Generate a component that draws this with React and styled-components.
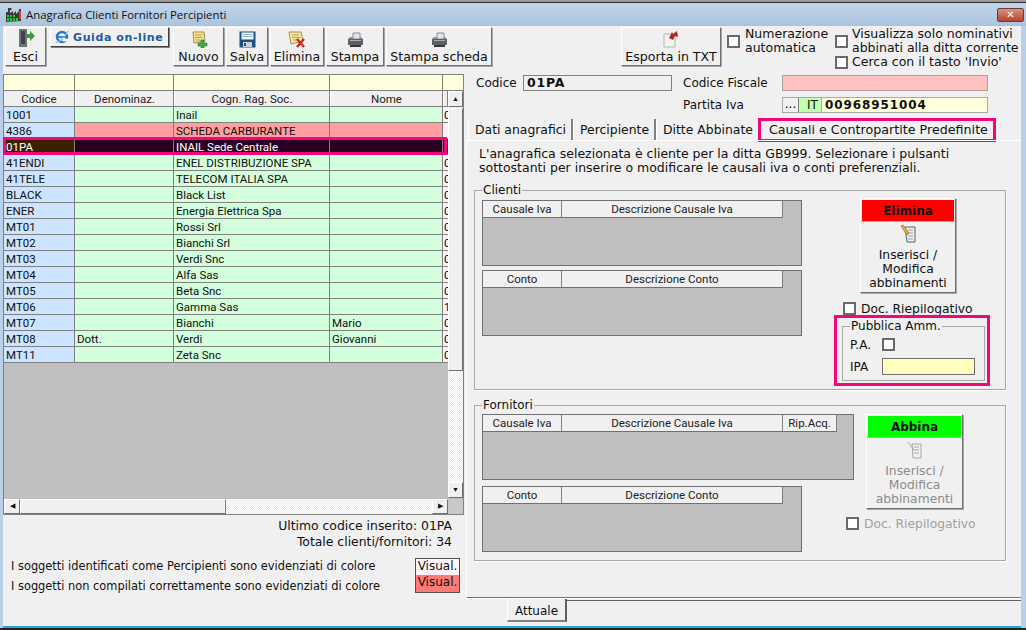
import styled, { createGlobalStyle } from "styled-components"

const ROWS = [
    { code: "1001", title: "", name: "Inail", first: "", extra: "0" },
    { code: "4386", title: "", name: "SCHEDA CARBURANTE", first: "", extra: "", kind: "error" },
    { code: "01PA", title: "", name: "INAIL Sede Centrale", first: "", extra: "", kind: "selected" },
    { code: "41ENDI", title: "", name: "ENEL DISTRIBUZIONE SPA", first: "", extra: "0" },
    { code: "41TELE", title: "", name: "TELECOM ITALIA SPA", first: "", extra: "0" },
    { code: "BLACK", title: "", name: "Black List", first: "", extra: "0" },
    { code: "ENER", title: "", name: "Energia Elettrica Spa", first: "", extra: "0" },
    { code: "MT01", title: "", name: "Rossi Srl", first: "", extra: "0" },
    { code: "MT02", title: "", name: "Bianchi Srl", first: "", extra: "0" },
    { code: "MT03", title: "", name: "Verdi Snc", first: "", extra: "0" },
    { code: "MT04", title: "", name: "Alfa Sas", first: "", extra: "0" },
    { code: "MT05", title: "", name: "Beta Snc", first: "", extra: "0" },
    { code: "MT06", title: "", name: "Gamma Sas", first: "", extra: "1" },
    { code: "MT07", title: "", name: "Bianchi", first: "Mario", extra: "0" },
    { code: "MT08", title: "Dott.", name: "Verdi", first: "Giovanni", extra: "0" },
    { code: "MT11", title: "", name: "Zeta Snc", first: "", extra: "0" },
]

const FactoryIcon = () => (
    <svg width="17" height="17" viewBox="0 0 17 17">
        <path d="M1 16V6h2V2h3l1 2H5v3l3-2v3l3-3v3l3-3v-2h2v12z" fill="#3a3a3a" />
        <path d="M2 15v-3h2v3zM5 15v-3h2v3zM8 15v-3h2v3zM11 15v-3h2v3z" fill="#2fc23a" />
        <path d="M2 11V9h2v2zM5 11V9h2v2zM8 11V9h2v2z" fill="#2fc23a" />
        <rect x="14" y="5" width="2" height="8" fill="#d33" />
    </svg>
)

const ExitIcon = () => (
    <svg width="20" height="20" viewBox="0 0 20 20">
        <path d="M3 1h8v18H3z" fill="#6d7276" />
        <path d="M5 3h4v13H5z" fill="#3e4347" />
        <path d="M11 6l3 0v-3l5 5-5 5v-3h-3z" fill="#3f9a3a" />
    </svg>
)

const IeIcon = () => (
    <svg width="16" height="16" viewBox="0 0 18 18">
        <circle cx="9" cy="9" r="5.6" fill="none" stroke="#2a78c8" strokeWidth="2.8" />
        <path d="M4 9h10" stroke="#2a78c8" strokeWidth="2" />
        <path d="M10 11h6v3h-6z" fill="#f0f0f0" />
        <path d="M2 15C5 16 13 8 16 2" fill="none" stroke="#8fbce8" strokeWidth="1.2" />
    </svg>
)

const NoteNewIcon = () => (
    <svg width="18" height="18" viewBox="0 0 18 18">
        <path d="M3 2h11l1 9-11 2z" fill="#f6e08f" stroke="#a59050" />
        <path d="M5 5h7M5 7.500h7M6 10h4" stroke="#b5a060" />
        <path d="M11 10h3v3h3v3h-3v2h-3v-2H8v-3h3z" fill="#35b23c" stroke="#1d7a24" strokeWidth=".6" />
    </svg>
)

const NoteDeleteIcon = () => (
    <svg width="20" height="18" viewBox="0 0 20 18">
        <path d="M2 2h12l2 9-12 3z" fill="#f6e4a2" stroke="#a59050" />
        <path d="M5 5h7M5 7.500h8M6 10h4" stroke="#b5a060" />
        <path d="M10 9l7 8M17 9l-7 8" stroke="#d4281e" strokeWidth="2.4" />
    </svg>
)

const FloppyIcon = () => (
    <svg width="17" height="17" viewBox="0 0 17 17">
        <rect width="16" height="16" x=".5" y=".5" fill="#1e4f7d" />
        <rect width="12" height="7" x="2.500" y="1.500" fill="#eef4fa" />
        <path d="M3.500 3.500h10M3.500 5.500h10" stroke="#9db8d2" />
        <rect width="9" height="5" x="4" y="11" fill="#c6d2de" />
        <rect width="2" height="3" x="5" y="12" fill="#1e4f7d" />
    </svg>
)

const PrinterIcon = () => (
    <svg width="17" height="16" viewBox="0 0 17 16">
        <path d="M6 1h7v6H6z" fill="#e4e4e4" stroke="#8a8a8a" />
        <path d="M1 7h15v6H1z" fill="#5c6064" />
        <path d="M1 7l2-2h3v2zM13 5h1l2 2h-3z" fill="#8c9094" />
        <path d="M3 13h11v2H3z" fill="#35383b" />
        <path d="M3 8h11v1H3z" fill="#a8adb2" />
    </svg>
)

const ExportIcon = () => (
    <svg width="18" height="18" viewBox="0 0 18 18">
        <path d="M2 4h9l2 2v11H2z" fill="#f4f4f4" stroke="#b5b5b5" />
        <path d="M7 8l3-6 1 2 4-3 1 6-3-1-2 4z" fill="#b3261e" />
    </svg>
)

const PadIcon = ({ $muted }) => (
    <svg width="18" height="20" viewBox="0 0 18 20">
        {$muted ? (
            <g fill="none" stroke="#a8a8a8">
                <path d="M6 4h9v14H7z" fill="#f0f0f0" />
                <path d="M8 7h5M8 10h5M8 13h5" />
                <path d="M2 2l6 8" />
            </g>
        ) : (
            <g>
                <path d="M6 3h10v15H8z" fill="#e9eef2" stroke="#59636b" />
                <path d="M9 6h5M9 9h5M9 12h5M9 15h5" stroke="#9aa6af" />
                <path d="M2 2l2-1 6 8-2 2z" fill="#e8b030" stroke="#8b5a10" strokeWidth=".6" />
            </g>
        )}
    </svg>
)

const App = () => {
    return (
        <Page>
            <GlobalStyle />
            <BehindStrip />
            <TitleBar>
                <FactoryIcon />
                <TitleText>Anagrafica Clienti Fornitori Percipienti</TitleText>
                <CloseButton>✕</CloseButton>
            </TitleBar>
            <Client>
                <Toolbar>
                    <ToolButton $width={41}><ExitIcon />Esci</ToolButton>
                    <HelpButton><IeIcon />Guida on-line</HelpButton>
                    <ToolButton $width={51} $gap={2}><NoteNewIcon />Nuovo</ToolButton>
                    <ToolButton $width={42}><FloppyIcon />Salva</ToolButton>
                    <ToolButton $width={54}><NoteDeleteIcon />Elimina</ToolButton>
                    <ToolButton $width={58}><PrinterIcon />Stampa</ToolButton>
                    <ToolButton $width={106}><PrinterIcon />Stampa scheda</ToolButton>
                    <ToolButton $width={100} $gap={127}><ExportIcon />Esporta in TXT</ToolButton>
                    <TopOption $width={106}>
                        <CheckBox />
                        <span>Numerazione<br />automatica</span>
                    </TopOption>
                    <TopOptions>
                        <TopCheck>
                            <CheckBox />
                            <span>Visualizza solo nominativi<br />abbinati alla ditta corrente</span>
                        </TopCheck>
                        <TopCheck>
                            <CheckBox />
                            <span>Cerca con il tasto 'Invio'</span>
                        </TopCheck>
                    </TopOptions>
                </Toolbar>
                <Body>
                    <LeftColumn>
                        <GridFrame>
                            <FilterRow>
                                <FilterCell $width={71} />
                                <FilterCell $width={99} />
                                <FilterCell $width={156} />
                                <FilterCell $width={113} />
                                <FilterCell $width={20} />
                            </FilterRow>
                            <GridMiddle>
                                <GridTable>
                                    <HeaderRow>
                                        <HeadCell $width={71}>Codice</HeadCell>
                                        <HeadCell $width={99}>Denominaz.</HeadCell>
                                        <HeadCell $width={156}>Cogn. Rag. Soc.</HeadCell>
                                        <HeadCell $width={113}>Nome</HeadCell>
                                        <HeadCell $width={5} />
                                    </HeaderRow>
                                    {ROWS.map((row) => (
                                        <Row key={row.code} $kind={row.kind}>
                                            <CodeCell $kind={row.kind}>{row.code}</CodeCell>
                                            <Cell $width={99} $kind={row.kind}>{row.title}</Cell>
                                            <Cell $width={156} $kind={row.kind}>{row.name}</Cell>
                                            <Cell $width={113} $kind={row.kind}>{row.first}</Cell>
                                            <LastCell $kind={row.kind}>{row.extra}</LastCell>
                                        </Row>
                                    ))}
                                </GridTable>
                                <VScroll>
                                    <ArrowButton>▲</ArrowButton>
                                    <VThumb />
                                    <ScrollTrack />
                                    <ArrowButton>▼</ArrowButton>
                                </VScroll>
                            </GridMiddle>
                            <HScroll>
                                <SideButton>◀</SideButton>
                                <HThumb />
                                <ScrollTrack />
                                <SideButton>▶</SideButton>
                                <ScrollCorner />
                            </HScroll>
                        </GridFrame>
                        <Totals>
                            <div>Ultimo codice inserito: 01PA</div>
                            <div>Totale clienti/fornitori: 34</div>
                        </Totals>
                        <Legend>
                            <LegendTexts>
                                <div>I soggetti identificati come Percipienti sono evidenziati di colore</div>
                                <div>I soggetti non compilati correttamente sono evidenziati di colore</div>
                            </LegendTexts>
                            <LegendBoxes>
                                <VisualBox>Visual.</VisualBox>
                                <VisualBox $error>Visual.</VisualBox>
                            </LegendBoxes>
                        </Legend>
                    </LeftColumn>
                    <RightColumn>
                        <Fields>
                            <FieldLabel>Codice</FieldLabel>
                            <CodeField>01PA</CodeField>
                            <FieldLabel $column={4}>Codice Fiscale</FieldLabel>
                            <FiscalField />
                            <FieldLabel $column={4}>Partita Iva</FieldLabel>
                            <VatField>
                                <DotsButton>...</DotsButton>
                                <CountryBox>IT</CountryBox>
                                <VatValue>00968951004</VatValue>
                            </VatField>
                        </Fields>
                        <Tabs>
                            <Tab>Dati anagrafici</Tab>
                            <Tab>Percipiente</Tab>
                            <Tab>Ditte Abbinate</Tab>
                            <ActiveTab>Causali e Contropartite Predefinite</ActiveTab>
                        </Tabs>
                        <TabPanel>
                            <Intro>
                                L'anagrafica selezionata è cliente per la ditta GB999. Selezionare i pulsanti<br />
                                sottostanti per inserire o modificare le causali iva o conti preferenziali.
                            </Intro>
                            <Group $height={206} $top={9} $pad={3}>
                                <legend>Clienti</legend>
                                <GroupBody>
                                    <Tables $gap={4}>
                                        <MiniTable $width={320} $height={66}>
                                            <MiniHead>
                                                <MiniCol $width={79}>Causale Iva</MiniCol>
                                                <MiniCol $width={221}>Descrizione Causale Iva</MiniCol>
                                            </MiniHead>
                                        </MiniTable>
                                        <MiniTable $width={320} $height={66}>
                                            <MiniHead>
                                                <MiniCol $width={79}>Conto</MiniCol>
                                                <MiniCol $width={221}>Descrizione Conto</MiniCol>
                                            </MiniHead>
                                        </MiniTable>
                                    </Tables>
                                    <ClientSide>
                                        <ActionButton $left={26} $top={-2} $width={96}>
                                            <ActionHead $color="#ff0000">Elimina</ActionHead>
                                            <ActionBody>
                                                <PadIcon />
                                                <span>Inserisci /<br />Modifica<br />abbinamenti</span>
                                            </ActionBody>
                                        </ActionButton>
                                        <DocCheck $left={9} $top={9}>
                                            <CheckBox />
                                            <span>Doc. Riepilogativo</span>
                                        </DocCheck>
                                        <PinkBox>
                                            <PaGroup>
                                                <legend>Pubblica Amm.</legend>
                                                <PaRow $top={5}>
                                                    <PaLabel>P.A.</PaLabel>
                                                    <CheckBox />
                                                </PaRow>
                                                <PaRow $top={7} $tall>
                                                    <PaLabel>IPA</PaLabel>
                                                    <IpaField />
                                                </PaRow>
                                            </PaGroup>
                                        </PinkBox>
                                    </ClientSide>
                                </GroupBody>
                            </Group>
                            <Group $height={162} $top={9} $pad={2}>
                                <legend>Fornitori</legend>
                                <GroupBody>
                                    <Tables $gap={6}>
                                        <MiniTable $width={372} $height={66}>
                                            <MiniHead>
                                                <MiniCol $width={79}>Causale Iva</MiniCol>
                                                <MiniCol $width={221}>Descrizione Causale Iva</MiniCol>
                                                <MiniCol $width={54}>Rip.Acq.</MiniCol>
                                            </MiniHead>
                                        </MiniTable>
                                        <MiniTable $width={320} $height={66}>
                                            <MiniHead>
                                                <MiniCol $width={79}>Conto</MiniCol>
                                                <MiniCol $width={221}>Descrizione Conto</MiniCol>
                                            </MiniHead>
                                        </MiniTable>
                                    </Tables>
                                    <SupplierSide>
                                        <ActionButton $left={12} $top={0} $width={97}>
                                            <ActionHead $color="#00ff00">Abbina</ActionHead>
                                            <ActionBody $muted>
                                                <PadIcon $muted />
                                                <span>Inserisci /<br />Modifica<br />abbinamenti</span>
                                            </ActionBody>
                                        </ActionButton>
                                        <DocCheck $left={-8} $top={8} $muted>
                                            <CheckBox />
                                            <span>Doc. Riepilogativo</span>
                                        </DocCheck>
                                    </SupplierSide>
                                </GroupBody>
                            </Group>
                        </TabPanel>
                        <BottomTabs>
                            <BottomTab>Attuale</BottomTab>
                            <BottomRest />
                        </BottomTabs>
                    </RightColumn>
                </Body>
            </Client>
            <BottomEdge />
        </Page>
    )
}

export default App

const PINK = "#f5057c"
const UI_FONT = `"DejaVu Sans", sans-serif`
const GRID_FONT = `Roboto, sans-serif`

const GlobalStyle = createGlobalStyle`
    html, body {
        margin: 0;
        padding: 0;
        background: #2a2a2a;
    }
    * {
        box-sizing: border-box;
    }
`

const Page = styled.div`
    display: flex;
    flex-direction: column;
    width: 1026px;
    height: 630px;
    overflow: hidden;
    font-family: ${UI_FONT};
    font-size: 12px;
    color: #101010;
    background: #b9d0e8;
`

const BehindStrip = styled.div`
    flex: none;
    height: 3px;
    background: linear-gradient(#9a9a9a 0 2px, #2e2e2e 2px);
`

const TitleBar = styled.div`
    display: flex;
    flex: none;
    align-items: center;
    gap: 4px;
    height: 23px;
    padding: 0 2px 0 5px;
    background: linear-gradient(#c3d6ea, #a9c3df);
`

const TitleText = styled.span`
    font-family: "Open Sans", sans-serif;
    font-size: 11.400px;
    color: #111;
`

const CloseButton = styled.div`
    display: flex;
    align-items: center;
    justify-content: center;
    margin-left: auto;
    width: 27px;
    height: 14px;
    border: 1px solid #6e3a34;
    border-radius: 2px;
    background: linear-gradient(#d99080, #b8432f);
    color: #fff;
    font-size: 10px;
    font-weight: bold;
`

const Client = styled.div`
    display: flex;
    flex-direction: column;
    flex: none;
    height: 602px;
    margin: 0 5px 0 3px;
    background: #f0f0f0;
    border-bottom: 2px solid #2ba4d8;
`

const BottomEdge = styled.div`
    flex: none;
    height: 2px;
    background: #222;
`

const Toolbar = styled.div`
    display: flex;
    flex: none;
    align-items: flex-start;
    gap: 2px;
    height: 41px;
    padding: 1px 0 0 2px;
`

const raised = `
    border: 1px solid;
    border-color: #fff #707070 #707070 #fff;
    box-shadow: 1px 1px 0 #a8a8a8;
    background: #f0f0f0;
`

const ToolButton = styled.div`
    ${raised}
    display: flex;
    flex-direction: column;
    align-items: center;
    justify-content: flex-end;
    flex: none;
    width: ${(props) => props.$width}px;
    height: 39px;
    margin-left: ${(props) => props.$gap || 0}px;
    font-size: 12.600px;
    line-height: 16px;
    white-space: nowrap;

    svg {
        margin-bottom: 1px;
    }
`

const HelpButton = styled.div`
    display: flex;
    align-items: center;
    gap: 3px;
    flex: none;
    width: 119px;
    height: 20px;
    margin-left: 2px;
    padding-left: 3px;
    border: 1px solid;
    border-color: #fff #404040 #404040 #fff;
    box-shadow: 1px 1px 0 #808080;
    color: #1d5aa8;
    font-size: 11px;
    font-weight: bold;
    letter-spacing: 0.6px;
    white-space: nowrap;
`

const CheckBox = styled.span`
    display: block;
    flex: none;
    width: 13px;
    height: 13px;
    border: 2px solid #6a6a6a;
    background: #fff;
`

const TopOption = styled.div`
    display: flex;
    align-items: center;
    gap: 5px;
    flex: none;
    width: ${(props) => props.$width}px;
    margin-left: 4px;
    font-size: 12.500px;
    line-height: 14px;
`

const TopOptions = styled.div`
    display: flex;
    flex-direction: column;
    flex: none;
    font-size: 12.500px;
    line-height: 14px;
`

const TopCheck = styled.div`
    display: flex;
    align-items: center;
    gap: 4px;
    white-space: nowrap;
`

const Body = styled.div`
    display: grid;
    grid-template-columns: 463px 1fr;
    height: 559px;
`

const LeftColumn = styled.div`
    display: flex;
    flex-direction: column;
    padding-top: 7px;
`

const GridFrame = styled.div`
    display: flex;
    flex-direction: column;
    width: 461px;
    height: 441px;
    border: 1px solid #808080;
    font-family: ${GRID_FONT};
    font-size: 11.500px;
`

const FilterRow = styled.div`
    display: flex;
    flex: none;
    height: 16px;
    background: #ffffdc;
    border-bottom: 1px solid #808080;
`

const FilterCell = styled.div`
    width: ${(props) => props.$width}px;
    border-right: 1px solid #808080;
    &:last-child {
        border-right: 0;
    }
`

const GridMiddle = styled.div`
    display: flex;
    flex: 1;
    min-height: 0;
`

const GridTable = styled.div`
    flex: 1;
    min-width: 0;
    background: #bfbfbf;
`

const HeaderRow = styled.div`
    display: flex;
    height: 16px;
    background: #f0f0f0;
    border-bottom: 1px solid #808080;
`

const HeadCell = styled.div`
    flex: none;
    width: ${(props) => props.$width}px;
    overflow: hidden;
    border-right: 1px solid #808080;
    border-left: 1px solid #fff;
    text-align: center;
    line-height: 17px;
    color: #222;
    &:first-child {
        border-left: 0;
    }
`

const Row = styled.div`
    position: relative;
    display: flex;
    height: 16px;
    border-bottom: 1px solid #808080;

    ${(props) => props.$kind === "selected" && `
        z-index: 1;
        &::after {
            content: "";
            position: absolute;
            top: -2px;
            right: 1px;
            bottom: -1px;
            left: -1px;
            border: 3px solid ${PINK};
        }
    `}
`

const cellColor = (kind) => {
    if (kind === "error") return "#ff9f9f"
    if (kind === "selected") return "#2a0022"
    return "#d4ffdc"
}

const Cell = styled.div`
    flex: none;
    width: ${(props) => props.$width}px;
    overflow: hidden;
    padding-left: 2px;
    border-right: 1px solid #808080;
    background: ${(props) => cellColor(props.$kind)};
    color: ${(props) => (props.$kind === "selected" ? "#fff" : "#101010")};
    line-height: 16px;
    white-space: nowrap;
`

const CodeCell = styled(Cell)`
    width: 71px;
    background: ${(props) => (props.$kind === "selected" ? "#3c2000" : "#cce4ff")};
`

const LastCell = styled(Cell)`
    width: 5px;
    border-right: 0;
    padding-left: 1px;
    background: ${(props) => {
        if (props.$kind === "selected") return "#2a0022"
        return props.$kind === "error" ? "#ffeef6" : "#fff4f8"
    }};
`

const VScroll = styled.div`
    display: flex;
    flex-direction: column;
    flex: none;
    width: 15px;
    background: #f0f0f0;
`

const ArrowButton = styled.div`
    ${raised}
    flex: none;
    height: 16px;
    font-size: 7px;
    line-height: 14px;
    text-align: center;
    color: #111;
    box-shadow: none;
`

const VThumb = styled.div`
    ${raised}
    flex: none;
    height: 263px;
    margin-top: 1px;
    box-shadow: none;
`

const ScrollTrack = styled.div`
    flex: 1;
    background: repeating-conic-gradient(#fff 0 25%, #ececec 0 50%) 0 0 / 2px 2px;
`

const HScroll = styled.div`
    display: flex;
    flex: none;
    height: 16px;
    border-top: 1px solid #bdbdbd;
`

const SideButton = styled.div`
    ${raised}
    flex: none;
    width: 16px;
    font-size: 7px;
    line-height: 13px;
    text-align: center;
    box-shadow: none;
`

const HThumb = styled.div`
    ${raised}
    flex: none;
    width: 206px;
    box-shadow: none;
    border-right-color: #808080;
`

const ScrollCorner = styled.div`
    flex: none;
    width: 15px;
    background: #c8c8c8;
`

const Totals = styled.div`
    padding: 3px 14px 0 0;
    font-size: 12.400px;
    text-align: right;
    line-height: 16px;
`

const Legend = styled.div`
    display: flex;
    align-items: flex-start;
    margin-top: 6px;
    padding: 0 6px 0 8px;
    font-size: 11.400px;
`

const LegendTexts = styled.div`
    flex: 1;
    line-height: 20px;
    white-space: nowrap;
`

const LegendBoxes = styled.div`
    flex: none;
    width: 45px;
    margin-top: 2px;
    border: 1px solid #505050;
    font-size: 12px;
`

const VisualBox = styled.div`
    height: ${(props) => (props.$error ? 17 : 16)}px;
    background: ${(props) => (props.$error ? "#ff7a74" : "#fff4fa")};
    line-height: 15px;
    text-align: center;
`

const RightColumn = styled.div`
    display: flex;
    flex-direction: column;
    min-width: 0;
`

const Fields = styled.div`
    display: grid;
    grid-template-columns: 47px 149px 11px 99px 206px;
    grid-auto-rows: 16px;
    row-gap: 6px;
    align-items: center;
    padding: 8px 0 0 10px;
`

const FieldLabel = styled.div`
    grid-column: ${(props) => props.$column || "auto"};
    white-space: nowrap;
`

const CodeField = styled.div`
    height: 16px;
    padding-left: 3px;
    border: 1px solid #808080;
    font-weight: bold;
    font-size: 12.500px;
    line-height: 14px;
    letter-spacing: 0.8px;
`

const FiscalField = styled.div`
    height: 16px;
    border: 1px solid #b0a0a0;
    background: #ffc0c0;
`

const VatField = styled.div`
    grid-column: 5;
    display: flex;
    height: 16px;
    border: 1px solid #a8a8a8;
    background: #ffffdc;
`

const DotsButton = styled.div`
    flex: none;
    width: 16px;
    border-right: 1px solid #808080;
    background: #f0f0f0;
    color: #000;
    line-height: 12px;
    text-align: center;
`

const CountryBox = styled.div`
    flex: none;
    width: 23px;
    padding-left: 8px;
    border-right: 1px solid #a8a8a8;
    background: #c0ffb0;
    line-height: 14px;
`

const VatValue = styled.div`
    padding-left: 3px;
    font-weight: bold;
    line-height: 14px;
    letter-spacing: 0.9px;
`

const Tabs = styled.div`
    display: flex;
    flex: none;
    align-items: flex-end;
    height: 22px;
    margin-top: 5px;
    padding-left: 2px;
`

const Tab = styled.div`
    flex: none;
    height: 21px;
    padding: 0 5px 0 6px;
    border-right: 2px solid #808080;
    border-left: 1px solid #fff;
    font-size: 12.400px;
    line-height: 22px;
    white-space: nowrap;
`

const ActiveTab = styled.div`
    flex: none;
    width: 238px;
    height: 24px;
    margin: 0 0 -2px -2px;
    padding-left: 8px;
    border: 3px solid ${PINK};
    font-size: 12.700px;
    line-height: 18px;
    white-space: nowrap;
`

const TabPanel = styled.div`
    flex: none;
    height: 458px;
    padding: 6px 0 0 7px;
    border-top: 1px solid #fff;
    border-left: 1px solid #fff;
    border-bottom: 1px solid #707070;
`

const Intro = styled.div`
    height: 28px;
    padding-left: 5px;
    font-size: 12.500px;
    line-height: 14px;
    white-space: nowrap;
`

const Group = styled.fieldset`
    width: 532px;
    height: ${(props) => props.$height}px;
    margin: ${(props) => props.$top}px 0 0 0;
    padding: ${(props) => props.$pad}px 0 0 7px;
    border: 1px solid #a8a8a8;
    box-shadow: 1px 1px 0 #fff;

    legend {
        padding: 0 1px;
        line-height: 13px;
    }
`

const GroupBody = styled.div`
    display: flex;
    align-items: flex-start;
`

const Tables = styled.div`
    display: flex;
    flex-direction: column;
    gap: ${(props) => props.$gap}px;
    flex: none;
    width: 372px;
`

const MiniTable = styled.div`
    width: ${(props) => props.$width}px;
    height: ${(props) => props.$height}px;
    border: 1px solid #707070;
    background: #bfbfbf;
`

const MiniHead = styled.div`
    display: flex;
    height: 17px;
`

const MiniCol = styled.div`
    flex: none;
    width: ${(props) => props.$width}px;
    border-right: 1px solid #808080;
    border-bottom: 1px solid #707070;
    background: #f0f0f0;
    font-family: ${GRID_FONT};
    font-size: 11.500px;
    line-height: 17px;
    text-align: center;
    color: #222;
`

const ClientSide = styled.div`
    display: flex;
    flex-direction: column;
    flex: none;
    width: 156px;
    margin-left: -20px;
`

const SupplierSide = styled.div`
    display: flex;
    flex-direction: column;
    flex: none;
    width: 120px;
`

const ActionButton = styled.div`
    ${raised}
    width: ${(props) => props.$width}px;
    margin-left: ${(props) => props.$left}px;
    margin-top: ${(props) => props.$top}px;
`

const ActionHead = styled.div`
    height: 22px;
    border: 1px solid #f0f0f0;
    border-bottom: 0;
    background: ${(props) => props.$color};
    font-weight: bold;
    line-height: 23px;
    text-align: center;
`

const ActionBody = styled.div`
    display: flex;
    flex-direction: column;
    align-items: center;
    height: 71px;
    border-top: 1px solid #b0b0b0;
    color: ${(props) => (props.$muted ? "#8c8c8c" : "#101010")};
    font-size: 12.300px;
    line-height: 14px;
    text-align: center;
    white-space: nowrap;

    svg {
        margin: 2px 0 4px;
        flex: none;
    }
`

const DocCheck = styled.div`
    display: flex;
    align-items: center;
    gap: 5px;
    height: 13px;
    margin: ${(props) => props.$top}px 0 0 ${(props) => props.$left}px;
    color: ${(props) => (props.$muted ? "#a0a0a0" : "#101010")};
    font-size: 12.300px;
    white-space: nowrap;
`

const PinkBox = styled.div`
    position: relative;
    width: 156px;
    height: 71px;
    padding: 2px 2px 0 5px;
    border: 3px solid ${PINK};
    background: #f0f0f0;
`

const PaGroup = styled.fieldset`
    height: 61px;
    margin: 0;
    padding: 0 0 0 7px;
    border: 1px solid #a8a8a8;

    legend {
        padding: 0 1px;
        line-height: 13px;
    }
`

const PaRow = styled.div`
    display: flex;
    align-items: center;
    height: ${(props) => (props.$tall ? 17 : 13)}px;
    margin-top: ${(props) => props.$top}px;
`

const PaLabel = styled.span`
    flex: none;
    width: 32px;
`

const IpaField = styled.div`
    width: 93px;
    height: 17px;
    border: 1px solid #707070;
    background: #ffffc0;
`

const BottomTabs = styled.div`
    display: flex;
    flex: 1;
    align-items: flex-start;
    padding-left: 41px;
    border-top: 1px solid #fff;
`

const BottomTab = styled.div`
    flex: none;
    width: 60px;
    height: 23px;
    padding-top: 2px;
    border-right: 2px solid #606060;
    border-bottom: 2px solid #808080;
    border-left: 1px solid #fff;
    line-height: 21px;
    text-align: center;
`

const BottomRest = styled.div`
    flex: 1;
    margin-top: 1px;
    border-top: 1px solid #606060;
`
